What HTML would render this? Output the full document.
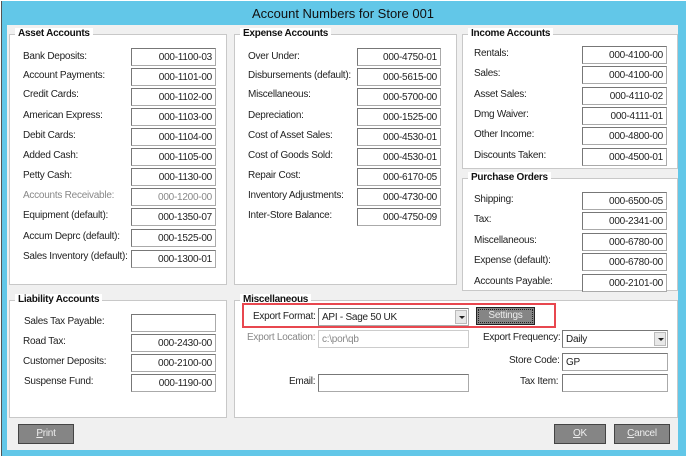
<!DOCTYPE html>
<html><head><style>
*{margin:0;padding:0;box-sizing:border-box}
body{width:686px;height:459px;background:#fff;position:relative;overflow:hidden;font-family:"Liberation Sans",sans-serif;font-size:10px;letter-spacing:-0.25px;color:#222}
.a{position:absolute}
#win{left:1px;top:1px;width:685px;height:455px;background:#62c7e8;border-left:1px solid #555}
#body{left:7px;top:25px;width:671px;height:425px;background:#f0f0f0}
.title{left:0;top:6px;width:686px;text-align:center;font-size:13px;letter-spacing:0;color:#111}
.g{position:absolute;background:#fff;border:1px solid #c8c8c8}
.gt{position:absolute;top:-7px;left:5px;background:#fff;padding:0 3px;font-weight:bold;font-size:10px;color:#111;line-height:12px}
.l{position:absolute;white-space:nowrap}
.i{position:absolute;height:18px;border:1px solid #aaa;border-top-color:#777;border-left-color:#777;background:#fff;text-align:right;padding:3px 3px 0 0;font-size:10px;white-space:nowrap}
.btn{position:absolute;height:20px;background:#858585;border:1px solid #444;color:#eee;text-align:center;line-height:18px}
</style></head><body>
<div class="a" id="win"></div>
<div class="a title">Account Numbers for Store 001</div>
<div class="a" id="body"></div>

<div class="g" style="left:9px;top:34px;width:218px;height:251px"><div class="gt">Asset Accounts</div></div>
<div class="l" style="left:23px;top:51px">Bank Deposits:</div><div class="i" style="left:131px;top:48px;width:85px">000-1100-03</div>
<div class="l" style="left:23px;top:70px">Account Payments:</div><div class="i" style="left:131px;top:68px;width:85px">000-1101-00</div>
<div class="l" style="left:23px;top:89px">Credit Cards:</div><div class="i" style="left:131px;top:88px;width:85px">000-1102-00</div>
<div class="l" style="left:23px;top:110px">American Express:</div><div class="i" style="left:131px;top:108px;width:85px">000-1103-00</div>
<div class="l" style="left:23px;top:130px">Debit Cards:</div><div class="i" style="left:131px;top:128px;width:85px">000-1104-00</div>
<div class="l" style="left:23px;top:150px">Added Cash:</div><div class="i" style="left:131px;top:148px;width:85px">000-1105-00</div>
<div class="l" style="left:23px;top:170px">Petty Cash:</div><div class="i" style="left:131px;top:168px;width:85px">000-1130-00</div>
<div class="l" style="left:23px;top:190px;color:#888">Accounts Receivable:</div><div class="i" style="left:131px;top:188px;width:85px;color:#888">000-1200-00</div>
<div class="l" style="left:23px;top:210px">Equipment (default):</div><div class="i" style="left:131px;top:208px;width:85px">000-1350-07</div>
<div class="l" style="left:23px;top:231px">Accum Deprc (default):</div><div class="i" style="left:131px;top:229px;width:85px">000-1525-00</div>
<div class="l" style="left:23px;top:251px">Sales Inventory (default):</div><div class="i" style="left:131px;top:250px;width:85px">000-1300-01</div>

<div class="g" style="left:234px;top:34px;width:223px;height:251px"><div class="gt">Expense Accounts</div></div>
<div class="l" style="left:248px;top:51px">Over Under:</div><div class="i" style="left:357px;top:48px;width:84px">000-4750-01</div>
<div class="l" style="left:248px;top:70px">Disbursements (default):</div><div class="i" style="left:357px;top:68px;width:84px">000-5615-00</div>
<div class="l" style="left:248px;top:89px">Miscellaneous:</div><div class="i" style="left:357px;top:88px;width:84px">000-5700-00</div>
<div class="l" style="left:248px;top:110px">Depreciation:</div><div class="i" style="left:357px;top:108px;width:84px">000-1525-00</div>
<div class="l" style="left:248px;top:130px">Cost of Asset Sales:</div><div class="i" style="left:357px;top:128px;width:84px">000-4530-01</div>
<div class="l" style="left:248px;top:150px">Cost of Goods Sold:</div><div class="i" style="left:357px;top:148px;width:84px">000-4530-01</div>
<div class="l" style="left:248px;top:170px">Repair Cost:</div><div class="i" style="left:357px;top:168px;width:84px">000-6170-05</div>
<div class="l" style="left:248px;top:190px">Inventory Adjustments:</div><div class="i" style="left:357px;top:188px;width:84px">000-4730-00</div>
<div class="l" style="left:248px;top:210px">Inter-Store Balance:</div><div class="i" style="left:357px;top:208px;width:84px">000-4750-09</div>

<div class="g" style="left:462px;top:34px;width:216px;height:135px"><div class="gt">Income Accounts</div></div>
<div class="l" style="left:474px;top:48px">Rentals:</div><div class="i" style="left:582px;top:46px;width:85px">000-4100-00</div>
<div class="l" style="left:474px;top:68px">Sales:</div><div class="i" style="left:582px;top:66px;width:85px">000-4100-00</div>
<div class="l" style="left:474px;top:89px">Asset Sales:</div><div class="i" style="left:582px;top:87px;width:85px">000-4110-02</div>
<div class="l" style="left:474px;top:109px">Dmg Waiver:</div><div class="i" style="left:582px;top:107px;width:85px">000-4111-01</div>
<div class="l" style="left:474px;top:129px">Other Income:</div><div class="i" style="left:582px;top:127px;width:85px">000-4800-00</div>
<div class="l" style="left:474px;top:150px">Discounts Taken:</div><div class="i" style="left:582px;top:148px;width:85px">000-4500-01</div>

<div class="g" style="left:462px;top:178px;width:216px;height:113px"><div class="gt">Purchase Orders</div></div>
<div class="l" style="left:474px;top:194px">Shipping:</div><div class="i" style="left:582px;top:192px;width:85px">000-6500-05</div>
<div class="l" style="left:474px;top:214px">Tax:</div><div class="i" style="left:582px;top:212px;width:85px">000-2341-00</div>
<div class="l" style="left:474px;top:235px">Miscellaneous:</div><div class="i" style="left:582px;top:233px;width:85px">000-6780-00</div>
<div class="l" style="left:474px;top:255px">Expense (default):</div><div class="i" style="left:582px;top:253px;width:85px">000-6780-00</div>
<div class="l" style="left:474px;top:276px">Accounts Payable:</div><div class="i" style="left:582px;top:274px;width:85px">000-2101-00</div>

<div class="g" style="left:9px;top:300px;width:218px;height:118px"><div class="gt">Liability Accounts</div></div>
<div class="l" style="left:24px;top:316px">Sales Tax Payable:</div><div class="i" style="left:131px;top:314px;width:85px"></div>
<div class="l" style="left:23px;top:336px">Road Tax:</div><div class="i" style="left:131px;top:334px;width:85px">000-2430-00</div>
<div class="l" style="left:23px;top:356px">Customer Deposits:</div><div class="i" style="left:131px;top:354px;width:85px">000-2100-00</div>
<div class="l" style="left:24px;top:376px">Suspense Fund:</div><div class="i" style="left:131px;top:374px;width:85px">000-1190-00</div>

<div class="g" style="left:234px;top:300px;width:444px;height:118px"><div class="gt">Miscellaneous</div></div>
<div class="a" style="left:242px;top:303px;width:314px;height:25px;border:2px solid #e8474f"></div>
<div class="l" style="left:253px;top:311px">Export Format:</div>
<div class="i" style="left:318px;top:308px;width:151px;text-align:left;padding-left:3px">API - Sage 50 UK</div>
<div class="a" style="left:455px;top:310px;width:12px;height:14px;background:#e8e8e8;border:1px solid #bbb"><svg width="10" height="12" style="position:absolute;left:1px;top:0"><path d="M2 5h6l-3 3z" fill="#222"/></svg></div>
<div class="btn" style="left:476px;top:307px;width:59px;height:18px;line-height:16px;border:1px solid #222;outline:1px dotted #222;outline-offset:-3px">Settings</div>
<div class="l" style="left:247px;top:332px;color:#888">Export Location:</div>
<div class="i" style="left:318px;top:330px;width:151px;text-align:left;padding-left:3px;color:#888;border-color:#ccc">c:\por\qb</div>
<div class="l" style="left:483px;top:332px">Export Frequency:</div>
<div class="i" style="left:562px;top:330px;width:106px;text-align:left;padding-left:3px">Daily</div>
<div class="a" style="left:654px;top:332px;width:12px;height:14px;background:#e8e8e8;border:1px solid #bbb"><svg width="10" height="12" style="position:absolute;left:1px;top:0"><path d="M2 5h6l-3 3z" fill="#222"/></svg></div>
<div class="l" style="left:509px;top:355px">Store Code:</div>
<div class="i" style="left:562px;top:353px;width:106px;text-align:left;padding-left:3px">GP</div>
<div class="l" style="left:289px;top:376px">Email:</div>
<div class="i" style="left:318px;top:374px;width:151px"></div>
<div class="l" style="left:520px;top:376px">Tax Item:</div>
<div class="i" style="left:562px;top:374px;width:106px"></div>

<div class="btn" style="left:18px;top:424px;width:56px"><u>P</u>rint</div>
<div class="btn" style="left:554px;top:424px;width:52px"><u>O</u>K</div>
<div class="btn" style="left:614px;top:424px;width:56px"><u>C</u>ancel</div>
</body></html>
